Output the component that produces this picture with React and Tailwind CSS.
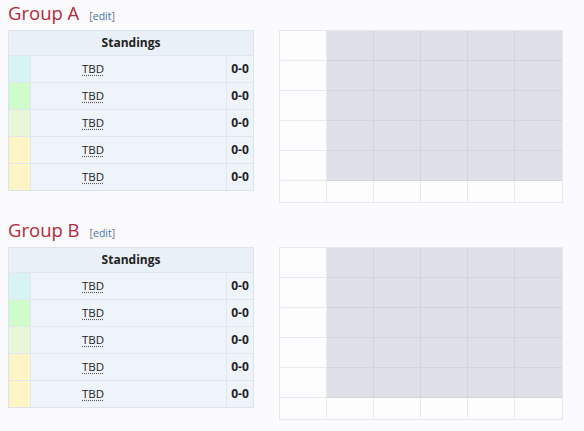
import React from "react";

const colors = ["bg-[#d7f3f3]", "bg-[#d0fccc]", "bg-[#e8f7da]", "bg-[#fdf5c6]", "bg-[#fdf5c6]"];

function Standings() {
  return (
    <div className="w-[246px] border border-[#dde3ec] bg-[#eff3fa] text-[12px] text-[#222]">
      <div className="flex h-[24px] items-center justify-center bg-[#eaf0f8] font-bold">Standings</div>
      {colors.map((c, i) => (
        <div key={i} className="flex h-[27px] border-t border-[#e1e6ef]">
          <div className={`w-[21px] ${c}`} />
          <div className="flex flex-1 items-center border-l border-[#e1e6ef] pl-[51px]">
            <span className="underline decoration-dotted decoration-[#555] underline-offset-2 text-[11.5px]">TBD</span>
          </div>
          <div className="flex w-[27px] items-center justify-center border-l border-[#e1e6ef] font-bold">0-0</div>
        </div>
      ))}
    </div>
  );
}

function Grid() {
  const rows = [0, 1, 2, 3, 4, 5];
  const cols = [0, 1, 2, 3, 4, 5];
  return (
    <div className="grid grid-cols-[repeat(6,47px)] grid-rows-[repeat(5,30px)_21px] border border-[#e7e8ec] bg-white">
      {rows.map((r) =>
        cols.map((c) => {
          const grey = r < 5 && c > 0;
          return (
            <div
              key={`${r}-${c}`}
              className={`${grey ? "bg-[#dfe1e8] border-[#d2d5dd]" : "bg-[#fdfdfe] border-[#e8e9ed]"} ${c < 5 ? "border-r" : ""} ${r < 5 ? "border-b" : ""}`}
            />
          );
        })
      )}
    </div>
  );
}

function Group({ name }) {
  return (
    <div>
      <div className="flex items-baseline pl-[8px] pt-[0px]">
        <span className="text-[18.5px] leading-[25px] text-[#b02a3c]">{name}</span>
        <span className="ml-[10px] text-[10.5px] text-[#72777d]">
          [<span className="text-[#3e6fa5]">edit</span>]
        </span>
      </div>
      <div className="mt-[5px] flex items-start pl-[8px]">
        <Standings />
        <div className="ml-[25px]">
          <Grid />
        </div>
      </div>
    </div>
  );
}

export default function App() {
  return (
    <div className="min-h-[431px] w-[584px] bg-[#fbfbfd]" style={{ fontFamily: '"Open Sans", "Noto Sans", sans-serif' }}>
      <Group name="Group A" />
      <div className="h-[14px]" />
      <Group name="Group B" />
    </div>
  );
}
